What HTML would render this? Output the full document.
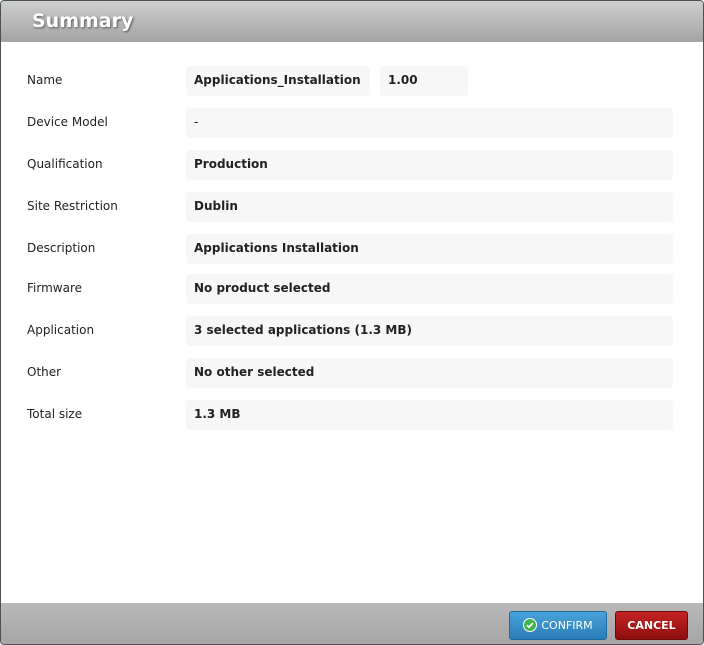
<!DOCTYPE html>
<html><head><style>
body{margin:0;width:704px;height:645px;background:#fff;font-family:"DejaVu Sans",Verdana,sans-serif;overflow:hidden}
.win{position:absolute;left:0;top:0;width:702px;height:643px;border:1px solid #4a5358;border-radius:4px;overflow:hidden;background:#fff}
.hd{height:41px;background:linear-gradient(#cfcfcf,#a3a3a3);position:relative}
.hd span{position:absolute;left:31px;top:9px;font:bold 19px "DejaVu Sans",Verdana,sans-serif;color:#fff;text-shadow:1px 1px 2px #555}
.row{position:absolute;left:26px;font-size:12px;color:#222}
.f{position:absolute;left:185px;width:487px;height:30px;background:#f7f7f7;border-radius:4px;font-weight:bold;font-size:12px;color:#222;line-height:29px;padding-left:8px;box-sizing:border-box}
.ft{position:absolute;left:0;top:602px;width:702px;height:41px;background:linear-gradient(#b9b9b9,#a6a6a6)}
.b{position:absolute;top:8px;height:27px;border-radius:3px;color:#fff;font-weight:bold;font-size:11px;line-height:27px;text-align:center}
</style></head><body><div class="win">
<div class="hd"><span>Summary</span></div>
<div class="row" style="top:72px">Name</div>
<div class="f" style="top:65px;width:184px">Applications_Installation</div>
<div class="f" style="top:65px;left:379px;width:88px">1.00</div>
<div class="row" style="top:114px">Device Model</div><div class="f" style="top:107px;font-weight:normal">-</div>
<div class="row" style="top:156px">Qualification</div><div class="f" style="top:149px">Production</div>
<div class="row" style="top:198px">Site Restriction</div><div class="f" style="top:191px">Dublin</div>
<div class="row" style="top:240px">Description</div><div class="f" style="top:233px">Applications Installation</div>
<div class="row" style="top:280px">Firmware</div><div class="f" style="top:273px">No product selected</div>
<div class="row" style="top:322px">Application</div><div class="f" style="top:315px">3 selected applications (1.3 MB)</div>
<div class="row" style="top:364px">Other</div><div class="f" style="top:357px">No other selected</div>
<div class="row" style="top:406px">Total size</div><div class="f" style="top:399px">1.3 MB</div>
<div class="ft">
<div class="b" style="left:508px;width:96px;background:linear-gradient(#4aa3da,#2a7cb8);border:1px solid #1f6aa0;font-weight:normal">
<svg width="14" height="14" viewBox="0 0 14 14" style="vertical-align:-3px;margin-right:4px"><circle cx="7" cy="7" r="6.5" fill="#3fb34f" stroke="#fff" stroke-width="1"/><path d="M4 7.2l2 2 4-4.2" stroke="#fff" stroke-width="1.8" fill="none"/></svg>CONFIRM</div>
<div class="b" style="left:614px;width:71px;background:linear-gradient(#c42323,#8e0e0e);border:1px solid #6d0a0a">CANCEL</div>
</div>
</div></body></html>
